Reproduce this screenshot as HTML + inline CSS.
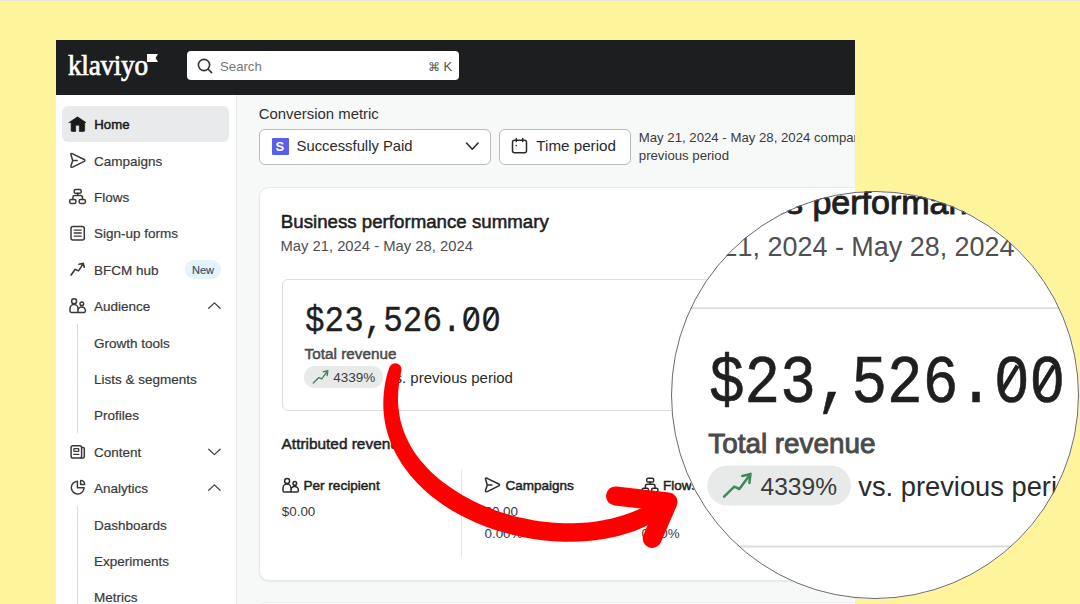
<!DOCTYPE html>
<html><head><meta charset="utf-8">
<style>
*{box-sizing:border-box;margin:0;padding:0}
html,body{width:1080px;height:604px;overflow:hidden}
body{background:#fef49b;font-family:"Liberation Sans",sans-serif;position:relative;color:#2b2b2b}
.abs{position:absolute}
.txt{position:absolute;white-space:nowrap;line-height:1}
#app{position:absolute;left:56px;top:40px;width:799px;height:564px;overflow:hidden;background:#f7f8f8}
#hdr{position:absolute;left:0;top:0;width:799px;height:55px;background:#1d1e20}
#logo{position:absolute;left:12px;top:10.5px;color:#fff;font-family:"Liberation Serif",serif;font-size:29px;line-height:1;-webkit-text-stroke:0.7px #fff;transform:scaleX(0.94);transform-origin:0 0;letter-spacing:-0.3px}
#search{position:absolute;left:131px;top:11.3px;width:272.3px;height:29px;background:#fff;border-radius:4px}
#side{position:absolute;left:0;top:55px;width:180.8px;height:509px;background:#fff;border-right:1px solid #e6e7e8}
.nv{position:absolute;left:37.9px;font-size:13.5px;color:#3a3a3a;white-space:nowrap;line-height:1;-webkit-text-stroke:0.2px #3a3a3a}
.sb{-webkit-text-stroke:0.5px currentColor}
.card{position:absolute;left:259px;top:187px;width:640px;height:394px;background:#fff;border:1px solid #e9eaea;border-radius:10px;box-shadow:0 1px 2px rgba(0,0,0,0.07)}
#card2{position:absolute;left:203px;top:562px;width:640px;height:100px;background:#fff;border:1px solid #ebecec;border-radius:8px}
#icons{position:absolute;left:0;top:0;width:1080px;height:604px}
#mag{position:absolute;left:671px;top:191.4px;width:408px;height:408px;border-radius:50%;overflow:hidden;background:#fff}
#magin{position:absolute;left:0;top:0;width:1080px;height:604px;transform-origin:0 0;transform:translate(-517.1px,-391.6px) scale(1.82)}
#magring{position:absolute;left:671px;top:191.4px;width:408px;height:408px;border-radius:50%;border:1px solid #6a6a6a}
#arrow{position:absolute;left:0;top:0;width:1080px;height:604px}
</style></head>
<body>
<div class="abs" style="left:0;top:0;width:1080px;height:1px;background:#e8e5d3"></div>
<div id="app">
  <div id="hdr">
    <div id="logo">klaviyo</div>
    <svg class="abs" style="left:91px;top:14px" width="11" height="8" viewBox="0 0 11 8"><path d="M0 0H11L8.6 4L11 8H0Z" fill="#fff"/></svg>
    <div id="search">
      <div class="txt" style="left:33px;top:8.5px;font-size:13.2px;color:#777">Search</div>
      <div class="txt" style="left:241.2px;top:10.9px;font-size:11.5px;color:#555">&#8984;</div><div class="txt" style="left:256.6px;top:8.6px;font-size:13px;color:#555">K</div>
    </div>
  </div>
  <div id="side">
    <div class="abs" style="left:6px;top:11px;width:166.5px;height:35.5px;background:#e8eaeb;border-radius:6px"></div>
    <div class="nv sb" style="left:38.3px;top:23px;color:#1b1b1b;font-size:13.2px">Home</div>
    <div class="nv" style="top:59.6px">Campaigns</div>
    <div class="nv" style="top:96.0px">Flows</div>
    <div class="nv" style="top:132.4px">Sign-up forms</div>
    <div class="nv" style="top:168.8px">BFCM hub</div>
    <div class="abs" style="left:128.8px;top:165.2px;width:36.6px;height:18.6px;border-radius:9.3px;background:#e5f3fb"></div>
    <div class="nv" style="left:136px;top:169.6px;font-size:11px;color:#354d6c;-webkit-text-stroke:0.15px #354d6c">New</div>
    <div class="nv" style="top:205.2px">Audience</div>
    <div class="abs" style="left:21px;top:228.7px;width:1px;height:109px;background:#d9dadb"></div>
    <div class="nv" style="top:241.6px">Growth tools</div>
    <div class="nv" style="top:278.0px">Lists &amp; segments</div>
    <div class="nv" style="top:314.4px">Profiles</div>
    <div class="nv" style="top:350.8px">Content</div>
    <div class="nv" style="top:387.2px">Analytics</div>
    <div class="abs" style="left:21px;top:410.9px;width:1px;height:120px;background:#d9dadb"></div>
    <div class="nv" style="top:423.6px">Dashboards</div>
    <div class="nv" style="top:460.0px">Experiments</div>
    <div class="nv" style="top:496.4px">Metrics</div>
  </div>
  <div class="txt" style="left:202.8px;top:66.6px;font-size:14.9px;color:#303030">Conversion metric</div>
  <div class="abs" style="left:203px;top:88.5px;width:232px;height:36px;background:#fff;border:1px solid #b9bbbd;border-radius:6px"></div>
  <div class="abs" style="left:216px;top:97.8px;width:17px;height:17px;background:#5a5fe8;border-radius:1px"></div>
  <div class="txt" style="left:219.5px;top:99.5px;font-size:13px;font-weight:bold;color:#fff">S</div>
  <div class="txt" style="left:240.6px;top:98.8px;font-size:14.8px;color:#2b2b2b">Successfully Paid</div>
  <div class="abs" style="left:443px;top:88.5px;width:132px;height:36px;background:#fff;border:1px solid #b9bbbd;border-radius:6px"></div>
  <div class="txt" style="left:480.3px;top:97.7px;font-size:15.2px;color:#2b2b2b">Time period</div>
  <div class="txt" style="left:582.8px;top:91.3px;font-size:13.2px;color:#3b3b3b">May 21, 2024 - May 28, 2024 compared to</div>
  <div class="txt" style="left:582.8px;top:108.9px;font-size:13.2px;color:#3b3b3b">previous period</div>
  <div style="position:absolute;left:-56px;top:-40px;width:1080px;height:604px"><div class="card">
    <div class="txt" style="left:20.8px;top:25.2px;font-size:18.7px;-webkit-text-stroke:0.55px #1f1f1f;color:#1f1f1f">Business performance summary</div>
    <div class="txt" style="left:20.4px;top:51px;font-size:14.8px;color:#505050">May 21, 2024 - May 28, 2024</div>
    <div class="abs" style="left:21.7px;top:90.5px;width:650px;height:132px;border:1px solid #dcdddd;border-radius:6px"></div>
    <div class="txt" style="left:44.5px;top:115px;font-family:'Liberation Mono',monospace;font-size:37.2px;transform:scaleX(0.877);transform-origin:0 0;color:#1f1f1f;-webkit-text-stroke:0.35px #1f1f1f">$23,526.00</div>
    <svg class="abs" style="left:0;top:0;overflow:visible" width="1" height="1"><rect x="207.6" y="126.6" width="6" height="7" fill="#fff"/><rect x="227.6" y="126.6" width="6" height="7" fill="#fff"/><path d="M214.6 123.2L205.6 137.8M234.6 123.2L225.6 137.8" stroke="#1f1f1f" stroke-width="2.5"/></svg>
    <div class="txt sb" style="left:44.6px;top:158px;font-size:15.3px;color:#4a4a4a">Total revenue</div>
    <div class="abs" style="left:44px;top:178px;width:79px;height:22px;background:#e8eaea;border-radius:11px"></div>
    <svg class="abs" style="left:0;top:0;overflow:visible" width="1" height="1" fill="none" stroke-linecap="round" stroke-linejoin="round"><path d="M53.3 195.1L58.9 189.6L61.7 190.9L67.8 182.6M63.3 183.7L67.8 182.6L67.2 187.6" stroke="#3d8a5a" stroke-width="1.4"/></svg>
    <div class="txt" style="left:73.3px;top:182.5px;font-size:13.5px;color:#3a3a3a">4339%</div>
    <div class="txt" style="left:127px;top:182px;font-size:15px;color:#2b2b2b">vs. previous period</div>
    <div class="txt sb" style="left:21.6px;top:248.4px;font-size:15.4px;color:#1f1f1f">Attributed revenue</div>
    <div class="txt sb" style="left:43.4px;top:291.2px;font-size:13.6px;color:#1f1f1f">Per recipient</div>
    <div class="txt" style="left:21.8px;top:316.6px;font-size:13.4px;color:#3a3a3a">$0.00</div>
    <div class="abs" style="left:200.8px;top:281px;width:1px;height:88px;background:#e5e6e6"></div>
    <div class="txt sb" style="left:245.4px;top:290.9px;font-size:13.5px;color:#1f1f1f">Campaigns</div>
    <div class="txt" style="left:224.5px;top:316.6px;font-size:13.4px;color:#3a3a3a">$0.00</div>
    <div class="txt" style="left:224.5px;top:338.6px;font-size:13.4px;color:#3a3a3a">0.00%</div>
    <div class="txt sb" style="left:403px;top:290.9px;font-size:13.5px;color:#1f1f1f">Flows</div>
    <div class="txt" style="left:381.6px;top:338.6px;font-size:13.4px;color:#3a3a3a">0.00%</div>
  </div></div>
  <div id="card2"></div>
</div>
<svg id="icons" viewBox="0 0 1080 604" fill="none" stroke="#3a3a3a" stroke-width="1.5" stroke-linecap="round" stroke-linejoin="round">
  <circle cx="204" cy="65" r="5.6" stroke="#333" stroke-width="1.6"/><path d="M208.2 69.2L211.6 72.6" stroke="#333" stroke-width="1.6"/>
  <path d="M69 122.5L77.5 116.8L86 122.5H84.7V130.5Q84.7 131.5 83.7 131.5H79.3V125.3H75.7V131.5H72.1Q71.1 131.5 71.1 130.5V122.5Z" fill="#1a1a1a" stroke="#1a1a1a" stroke-width="0.6"/>
  <path d="M487.3 484.9L485.6 479.6Q485 477.4 487.2 478.3L498.8 484Q500.2 484.9 498.8 485.8L487.2 491.6Q485 492.5 485.6 490.3ZM487.3 484.9H491.8" transform="translate(-414.6 -324.5)"/>
  <rect x="74.2" y="189.5" width="7" height="3.8" rx="1.4"/><rect x="69.7" y="199.4" width="6.2" height="4" rx="1.4"/><rect x="79.2" y="199.4" width="6.2" height="4" rx="1.4"/>
  <path d="M77.7 193.3V195.4M72.9 199.4V197.4Q72.9 195.4 74.9 195.4H80.5Q82.5 195.4 82.5 197.4V199.4"/>
  <rect x="71" y="226.6" width="13.3" height="13.3" rx="2"/><path d="M74.2 230.1H81.2M74.2 233H81.2M74.2 236.1H81.2" stroke-width="1.4"/>
  <path d="M71.1 275L75.1 269.3L78.5 270.9L83.3 263.6M79 264.2L83.3 263.4L84.3 267.3" stroke-width="1.6"/>
  <circle cx="74.1" cy="301.3" r="2.5"/><circle cx="81.8" cy="303.8" r="1.8"/><path d="M70 308.5A4 4 0 0 1 78 308.5V312.4H71.3Q70 312.4 70 311.1ZM78 312.4H84.1Q85.4 312.4 85.4 311.1V310.6A3.7 3.7 0 0 0 78 310.6"/>
  <path d="M208.7 308.3L214.4 302.9L220.1 308.3" stroke-width="1.3" stroke="#444"/>
  <rect x="71.1" y="445.7" width="10.5" height="12.3" rx="1.8"/><path d="M81.6 447.4H83Q84.3 447.4 84.3 448.8V456.5Q84.3 458 82.8 458H81.6"/><rect x="73.9" y="448.6" width="4.8" height="2.8" rx="0.5" stroke-width="1.3"/><path d="M73.8 454.3H78.8" stroke-width="1.3"/>
  <path d="M208.7 449.2L214.4 454.6L220.1 449.2" stroke-width="1.3" stroke="#444"/>
  <path d="M77.4 481.2A6.4 6.4 0 1 0 84.1 487.8H77.4Z"/><path d="M80.6 480.4V484.5H84.7A4.1 4.1 0 0 0 80.6 480.4Z" stroke-width="1.4"/>
  <path d="M208.7 490.3L214.4 484.9L220.1 490.3" stroke-width="1.3" stroke="#444"/>
  <path d="M466.5 143L472.3 149.2L478.1 143" stroke="#2b2b2b" stroke-width="1.6"/>
  <rect x="512.5" y="140.3" width="14" height="12.5" rx="2" stroke="#2b2b2b" stroke-width="1.5"/><path d="M516.3 138.5V141.5M522.7 138.5V141.5" stroke="#2b2b2b"/><circle cx="516.3" cy="145.6" r="0.8" fill="#2b2b2b" stroke="none"/>
  <g transform="translate(213 179.6)" stroke="#2b2b2b"><circle cx="74.1" cy="301.3" r="2.5"/><circle cx="81.8" cy="303.8" r="1.8"/><path d="M70 308.5A4 4 0 0 1 78 308.5V312.4H71.3Q70 312.4 70 311.1ZM78 312.4H84.1Q85.4 312.4 85.4 311.1V310.6A3.7 3.7 0 0 0 78 310.6"/></g>
  <path d="M487.3 484.9L485.6 479.6Q485 477.4 487.2 478.3L498.8 484Q500.2 484.9 498.8 485.8L487.2 491.6Q485 492.5 485.6 490.3ZM487.3 484.9H491.8" stroke="#2b2b2b"/>
  <g stroke="#2b2b2b" transform="translate(572.5 288.8)"><rect x="74.2" y="189.5" width="7" height="3.8" rx="1.4"/><rect x="69.7" y="199.4" width="6.2" height="4" rx="1.4"/><rect x="79.2" y="199.4" width="6.2" height="4" rx="1.4"/>
  <path d="M77.7 193.3V195.4M72.9 199.4V197.4Q72.9 195.4 74.9 195.4H80.5Q82.5 195.4 82.5 197.4V199.4"/></g>
</svg>
<div id="mag"><div id="magin"><div class="card">
    <div class="txt" style="left:20.8px;top:25.2px;font-size:18.7px;-webkit-text-stroke:0.55px #1f1f1f;color:#1f1f1f">Business performance summary</div>
    <div class="txt" style="left:20.4px;top:51px;font-size:14.8px;color:#505050">May 21, 2024 - May 28, 2024</div>
    <div class="abs" style="left:21.7px;top:90.5px;width:650px;height:132px;border:1px solid #dcdddd;border-radius:6px"></div>
    <div class="txt" style="left:44.5px;top:115px;font-family:'Liberation Mono',monospace;font-size:37.2px;transform:scaleX(0.877);transform-origin:0 0;color:#1f1f1f;-webkit-text-stroke:0.35px #1f1f1f">$23,526.00</div>
    <svg class="abs" style="left:0;top:0;overflow:visible" width="1" height="1"><rect x="207.6" y="126.6" width="6" height="7" fill="#fff"/><rect x="227.6" y="126.6" width="6" height="7" fill="#fff"/><path d="M214.6 123.2L205.6 137.8M234.6 123.2L225.6 137.8" stroke="#1f1f1f" stroke-width="2.5"/></svg>
    <div class="txt sb" style="left:44.6px;top:158px;font-size:15.3px;color:#4a4a4a">Total revenue</div>
    <div class="abs" style="left:44px;top:178px;width:79px;height:22px;background:#e8eaea;border-radius:11px"></div>
    <svg class="abs" style="left:0;top:0;overflow:visible" width="1" height="1" fill="none" stroke-linecap="round" stroke-linejoin="round"><path d="M53.3 195.1L58.9 189.6L61.7 190.9L67.8 182.6M63.3 183.7L67.8 182.6L67.2 187.6" stroke="#3d8a5a" stroke-width="1.4"/></svg>
    <div class="txt" style="left:73.3px;top:182.5px;font-size:13.5px;color:#3a3a3a">4339%</div>
    <div class="txt" style="left:127px;top:182px;font-size:15px;color:#2b2b2b">vs. previous period</div>
    <div class="txt sb" style="left:21.6px;top:248.4px;font-size:15.4px;color:#1f1f1f">Attributed revenue</div>
    <div class="txt sb" style="left:43.4px;top:291.2px;font-size:13.6px;color:#1f1f1f">Per recipient</div>
    <div class="txt" style="left:21.8px;top:316.6px;font-size:13.4px;color:#3a3a3a">$0.00</div>
    <div class="abs" style="left:200.8px;top:281px;width:1px;height:88px;background:#e5e6e6"></div>
    <div class="txt sb" style="left:245.4px;top:290.9px;font-size:13.5px;color:#1f1f1f">Campaigns</div>
    <div class="txt" style="left:224.5px;top:316.6px;font-size:13.4px;color:#3a3a3a">$0.00</div>
    <div class="txt" style="left:224.5px;top:338.6px;font-size:13.4px;color:#3a3a3a">0.00%</div>
    <div class="txt sb" style="left:403px;top:290.9px;font-size:13.5px;color:#1f1f1f">Flows</div>
    <div class="txt" style="left:381.6px;top:338.6px;font-size:13.4px;color:#3a3a3a">0.00%</div>
  </div></div></div>
<div id="magring"></div>
<svg id="arrow" viewBox="0 0 1080 604">
  <path d="M389.3 367.8 L387.5 373.1 L386.2 378.3 L385.1 383.6 L384.3 388.8 L383.7 394.0 L383.4 399.1 L383.3 404.2 L383.4 409.2 L383.8 414.1 L384.4 419.0 L385.2 423.9 L386.3 428.6 L387.5 433.3 L389.0 437.9 L390.7 442.4 L392.5 446.8 L394.6 451.2 L396.8 455.4 L399.2 459.6 L401.7 463.7 L404.5 467.7 L407.4 471.6 L410.4 475.4 L413.6 479.1 L416.9 482.7 L420.4 486.2 L424.0 489.7 L427.7 493.0 L431.5 496.2 L435.5 499.3 L439.5 502.3 L443.7 505.2 L448.0 508.0 L452.4 510.7 L456.9 513.2 L461.5 515.7 L466.1 518.0 L470.8 520.3 L475.6 522.4 L480.4 524.4 L485.4 526.4 L490.3 528.2 L495.4 529.9 L500.4 531.5 L505.5 533.0 L510.7 534.3 L515.9 535.6 L521.1 536.7 L526.3 537.8 L531.6 538.7 L536.9 539.5 L542.2 540.2 L547.5 540.7 L552.8 541.2 L558.1 541.5 L563.4 541.7 L568.7 541.8 L573.9 541.7 L579.2 541.5 L584.4 541.2 L589.7 540.8 L594.8 540.2 L600.0 539.6 L605.1 538.7 L610.2 537.8 L615.2 536.7 L620.1 535.4 L625.0 534.1 L629.9 532.5 L634.7 530.9 L639.4 529.1 L644.0 527.1 L648.5 525.0 L653.0 522.8 L657.4 520.4 L661.6 517.8 L665.8 515.1 L669.8 512.2 L673.8 509.2 L662.2 494.8 L658.9 497.4 L655.4 499.8 L651.8 502.1 L648.1 504.3 L644.4 506.4 L640.5 508.4 L636.5 510.2 L632.5 511.9 L628.3 513.5 L624.1 515.0 L619.8 516.3 L615.4 517.5 L611.0 518.7 L606.5 519.6 L601.9 520.5 L597.3 521.3 L592.6 521.9 L587.9 522.4 L583.1 522.8 L578.4 523.1 L573.5 523.2 L568.7 523.3 L563.9 523.2 L559.0 523.0 L554.1 522.7 L549.2 522.3 L544.3 521.8 L539.4 521.2 L534.6 520.4 L529.7 519.6 L524.9 518.6 L520.0 517.6 L515.2 516.4 L510.5 515.1 L505.8 513.8 L501.1 512.3 L496.5 510.7 L491.9 509.1 L487.4 507.3 L482.9 505.4 L478.6 503.5 L474.2 501.4 L470.0 499.3 L465.9 497.0 L461.8 494.7 L457.8 492.3 L453.9 489.8 L450.1 487.3 L446.4 484.6 L442.8 481.9 L439.3 479.2 L436.0 476.3 L432.7 473.4 L429.6 470.4 L426.6 467.3 L423.7 464.1 L420.9 460.9 L418.3 457.5 L415.8 454.2 L413.5 450.7 L411.3 447.2 L409.3 443.6 L407.5 439.9 L405.7 436.2 L404.2 432.4 L402.8 428.5 L401.6 424.6 L400.5 420.6 L399.7 416.5 L399.0 412.3 L398.5 408.1 L398.1 403.8 L398.0 399.4 L398.1 394.9 L398.3 390.4 L398.8 385.7 L399.5 381.0 L400.3 376.2 L401.3 371.2Z" fill="#ff0000"/>
  <circle cx="395.3" cy="369.5" r="6.2" fill="#ff0000"/>
  <path d="M615.5 496L668 502L652.2 538.5" fill="none" stroke="#ff0000" stroke-width="19" stroke-linecap="round" stroke-linejoin="round"/>
</svg>
</body></html>
